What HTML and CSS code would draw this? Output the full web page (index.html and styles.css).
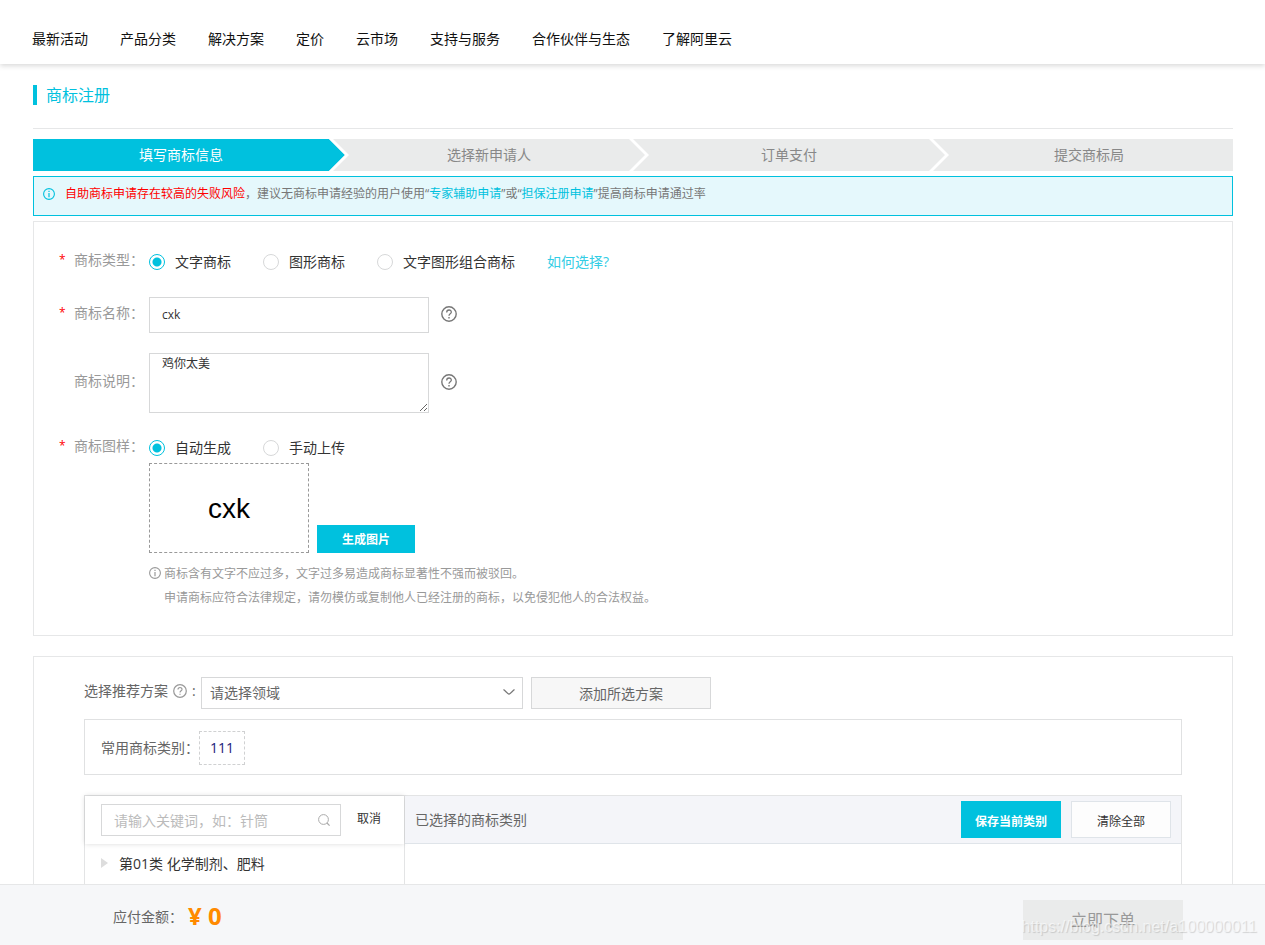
FILE: index.html
```html
<!DOCTYPE html>
<html lang="zh-CN">
<head>
<meta charset="utf-8">
<title>商标注册</title>
<meta name="viewport" content="width=device-width, initial-scale=1">
<link rel="stylesheet" href="styles.css">
</head>
<body>
<svg class="sprite" aria-hidden="true">
  <symbol id="help" viewBox="0 0 16 16"><circle cx="8" cy="8" r="7.2" fill="none" stroke="currentColor" stroke-width="1.4"/><path d="M5.7 6.4C5.7 3.2 10.4 3.3 10.3 6.2C10.2 7.8 8 7.7 8 9.7" fill="none" stroke="currentColor" stroke-width="1.3"/><path d="M7.3 11h1.4v1.4H7.3z" fill="currentColor"/></symbol>
  <symbol id="info" viewBox="0 0 12 12"><circle cx="6" cy="6" r="5.4" fill="none" stroke="currentColor" stroke-width="1.1"/><path d="M5.4 2.8h1.2v1.2H5.4zM5.4 5h1.2v4.2H5.4z" fill="currentColor"/></symbol>
</svg>

<header class="topbar">
  <nav class="nav">
    <a href="#">最新活动</a>
    <a href="#">产品分类</a>
    <a href="#">解决方案</a>
    <a href="#">定价</a>
    <a href="#">云市场</a>
    <a href="#">支持与服务</a>
    <a href="#">合作伙伴与生态</a>
    <a href="#">了解阿里云</a>
  </nav>
</header>

<main class="content">
  <div class="title-row"><h1 class="title">商标注册</h1></div>

  <ol class="steps">
    <li class="step step-active">填写商标信息<svg class="step-arrow" viewBox="0 0 20 32"><path d="M0 0H20V32H0z" fill="#eaebeb"/><path d="M0 0L16 16L0 32z" fill="#00c1de"/><path d="M0 0H4L20 16L4 32H0L16 16z" fill="#fff"/></svg></li>
    <li class="step">选择新申请人<svg class="step-arrow" viewBox="0 0 20 32"><path d="M0 0H4L20 16L4 32H0L16 16z" fill="#fff"/></svg></li>
    <li class="step">订单支付<svg class="step-arrow" viewBox="0 0 20 32"><path d="M0 0H4L20 16L4 32H0L16 16z" fill="#fff"/></svg></li>
    <li class="step">提交商标局</li>
  </ol>

  <div class="alert">
    <svg class="alert-icon"><use href="#info"/></svg>
    <p class="alert-text"><span class="danger">自助商标申请存在较高的失败风险</span>，建议无商标申请经验的用户使用“<a href="#">专家辅助申请</a>”或“<a href="#">担保注册申请</a>”提高商标申请通过率</p>
  </div>

  <form class="panel form">
    <div class="row row-radio" role="radiogroup" aria-labelledby="type-label">
      <span class="star">*</span><span class="label" id="type-label">商标类型：</span>
      <div class="options">
        <label class="option"><input class="radio" type="radio" name="type" checked>文字商标</label>
        <label class="option"><input class="radio" type="radio" name="type">图形商标</label>
        <label class="option"><input class="radio" type="radio" name="type">文字图形组合商标</label>
        <a class="how" href="#">如何选择?</a>
      </div>
    </div>
    <div class="row">
      <span class="star">*</span><label class="label" for="name">商标名称：</label>
      <input class="text-input" id="name" type="text" value="cxk">
      <svg class="help"><use href="#help"/></svg>
    </div>
    <div class="row">
      <span class="star"></span><label class="label" for="desc">商标说明：</label>
      <textarea class="text-area" id="desc">鸡你太美</textarea>
      <svg class="help"><use href="#help"/></svg>
    </div>
    <div class="row row-radio row-image" role="radiogroup" aria-labelledby="image-label">
      <span class="star">*</span><span class="label" id="image-label">商标图样：</span>
      <div class="options">
        <label class="option"><input class="radio" type="radio" name="image" checked>自动生成</label>
        <label class="option"><input class="radio" type="radio" name="image">手动上传</label>
      </div>
    </div>
    <div class="sample">
      <div class="sample-row">
        <div class="preview">cxk</div>
        <button class="btn-primary btn-generate" type="button">生成图片</button>
      </div>
      <div class="note">
        <svg class="note-icon"><use href="#info"/></svg>
        <p class="note-text">商标含有文字不应过多，文字过多易造成商标显著性不强而被驳回。<br>申请商标应符合法律规定，请勿模仿或复制他人已经注册的商标，以免侵犯他人的合法权益。</p>
      </div>
    </div>
  </form>

  <section class="panel category">
    <div class="plan">
      <label class="plan-label" for="plan">选择推荐方案 <svg class="plan-help"><use href="#help"/></svg> :</label>
      <div class="select-wrap">
        <select class="select" id="plan"><option>请选择领域</option></select>
        <svg class="chevron" viewBox="0 0 12 8"><path d="M.5 1.5C3 3.5 4.500 5.500 6 6.200C7.500 5.500 9 3.500 11.500 1.500" fill="none" stroke="#777" stroke-width="1.2"/></svg>
      </div>
      <button class="btn-add" type="button">添加所选方案</button>
    </div>
    <div class="common">
      <span>常用商标类别：</span><a class="tag" href="#">111</a>
    </div>
    <div class="picker">
      <div class="picker-left">
        <div class="search-bar">
          <div class="search">
            <input class="search-input" type="text" aria-label="关键词" placeholder="请输入关键词，如：针筒">
            <svg class="search-icon" viewBox="0 0 12 12"><circle cx="5.500" cy="5.500" r="4.900" fill="none" stroke="#aaa"/><path d="M9 9L11.600 11.600" stroke="#aaa" stroke-width="1.200"/></svg>
          </div>
          <button class="cancel" type="button">取消</button>
        </div>
        <div class="tree-item"><svg class="caret" viewBox="0 0 7 10"><path d="M0 0L7 5L0 10z" fill="#ddd"/></svg>第01类 化学制剂、肥料</div>
      </div>
      <div class="picker-right">
        <div class="selected-head">
          <span class="selected-title">已选择的商标类别</span>
          <button class="btn-primary btn-save" type="button">保存当前类别</button>
          <button class="btn-clear" type="button">清除全部</button>
        </div>
      </div>
    </div>
  </section>
</main>

<footer class="paybar">
  <span class="pay-label">应付金额：</span>
  <strong class="price">¥ 0</strong>
  <button class="btn-order" type="button">立即下单</button>
  <span class="watermark">https://blog.csdn.net/a100000011</span>
</footer>
</body>
</html>
```
FILE: styles.css
```css
* { box-sizing: border-box; }

body {
  margin: 0;
  height: 100vh;
  display: flex;
  flex-direction: column;
  overflow: hidden;
  background: #fff;
  color: #333;
  font-family: "Open Sans", "Noto Sans CJK SC", sans-serif;
  font-size: 14px;
  line-height: 20px;
}

button, input, select, textarea { font: inherit; color: inherit; border-radius: 0; outline: 0; }
button { padding: 0; border: 0; background: none; cursor: pointer; }
a { text-decoration: none; color: #00c1de; }
p, ol { margin: 0; padding: 0; }
svg { flex: none; }
.sprite { display: none; }

.topbar {
  flex: none;
  height: 64px;
  padding: 29px 32px 0;
  box-shadow: 0 2px 5px rgba(0, 0, 0, .15);
}
.nav { display: flex; gap: 32px; }
.nav a { color: #111; white-space: nowrap; }

.content {
  flex: 1;
  min-height: 0;
  overflow: hidden;
  margin-top: 6px;
  padding: 15px 32px 0 33px;
}

.title-row { padding-bottom: 23px; border-bottom: 1px solid #e6e7e8; }
.title {
  margin: 0;
  padding-left: 9px;
  border-left: 4px solid #00c1de;
  color: #00c1de;
  font-size: 16px;
  font-weight: 400;
  line-height: 20px;
}

.steps {
  display: grid;
  grid-template-columns: repeat(4, 1fr);
  margin: 10px 0 5px;
  list-style: none;
  background: #eaebeb;
}
.step {
  position: relative;
  padding-left: 12px;
  line-height: 32px;
  text-align: center;
  color: #888;
}
.step-active { padding: 0 4px 0 0; background: #00c1de; color: #fff; }
.step-arrow { position: absolute; z-index: 1; top: 0; right: -16px; width: 20px; height: 32px; }

.alert {
  display: flex;
  gap: 10px;
  height: 40px;
  padding: 7px 9px;
  border: 1px solid #00c1de;
  background: #e5f8fc;
  color: #777;
  font-size: 12px;
}
.alert-icon { width: 12px; height: 12px; margin-top: 4px; color: #00c1de; }
.danger { color: #f00; }

.panel { margin-top: 5px; border: 1px solid #e6e7e8; }
.form { padding: 30px 25px 25px; }
.row { display: flex; align-items: center; margin-bottom: 20px; }
.row-radio { margin-bottom: 25px; }
.star { width: 15px; padding-bottom: 4px; color: #f00; font-size: 12px; line-height: 16px; }
.label { width: 75px; padding-bottom: 4px; color: #999; line-height: 16px; white-space: nowrap; }
.options { display: flex; gap: 32px; }
.option { display: flex; align-items: center; gap: 10px; white-space: nowrap; }
.how { color: #33cde5; }
.radio {
  appearance: none;
  width: 16px;
  height: 16px;
  margin: 0;
  border: 1px solid #d7d8d9;
  border-radius: 50%;
}
.radio:checked { border-color: #00c1de; background: radial-gradient(circle, #00c1de 4px, #fff 5px); }
.text-input { width: 280px; height: 36px; padding: 0 12px 2px; border: 1px solid #d7d8d9; font-size: 12px; }
.text-area { width: 280px; height: 60px; padding: 0 12px; border: 1px solid #d7d8d9; font-size: 12px; resize: both; }
.help { width: 16px; height: 16px; margin: 0 0 2px 12px; color: #777; }

.row-image { margin: 25px 0 5px; }
.sample { padding-left: 90px; }
.sample-row { display: flex; align-items: flex-end; gap: 8px; }
.preview {
  width: 160px;
  height: 90px;
  border: 1px dashed #999;
  color: #000;
  font-family: "Liberation Sans", sans-serif;
  font-size: 28px;
  line-height: 90px;
  text-align: center;
}
.btn-primary { background: #00c1de; color: #fff; font-size: 12px; font-weight: 700; }
.btn-generate { width: 98px; height: 28px; padding-top: 2px; }
.note { display: flex; gap: 3px; margin-top: 9px; color: #999; font-size: 12px; }
.note-icon { width: 12px; height: 12px; margin-top: 5px; }
.note-text { line-height: 24px; }

.category { margin-top: 20px; padding: 20px 50px; }
.plan { display: flex; gap: 8px; color: #666; }
.plan-label { display: flex; align-items: center; gap: 5px; height: 28px; width: 109px; white-space: nowrap; }
.plan-help { width: 14px; height: 14px; color: #999; }
.select-wrap { position: relative; width: 322px; }
.select {
  appearance: none;
  width: 100%;
  height: 32px;
  padding: 0 8px;
  border: 1px solid #d7d8d9;
  background: #fff;
}
.chevron { position: absolute; top: 11px; right: 8px; width: 12px; height: 8px; pointer-events: none; }
.btn-add { width: 180px; height: 32px; padding-top: 2px; border: 1px solid #d7d8d9; background: #f7f7f7; }

.common {
  display: flex;
  align-items: center;
  margin-top: 10px;
  padding: 11px 16px 9px;
  border: 1px solid #e0e1e2;
  color: #666;
}
.tag { padding: 6px 10px; border: 1px dashed #d0d1d2; color: #1a1a7a; }

.picker { display: flex; height: 400px; margin-top: 20px; border: 1px solid #e3e4e5; }
.picker-left { width: 320px; border-right: 1px solid #e3e4e5; }
.search-bar {
  display: flex;
  gap: 16px;
  height: 48px;
  padding: 8px 16px;
  box-shadow: 0 0 5px rgba(0, 0, 0, .15);
}
.search { position: relative; width: 240px; }
.search-input { width: 100%; height: 32px; padding: 0 12px; border: 1px solid #d7d8d9; }
.search-input::placeholder { color: #bbb; }
.search-icon { position: absolute; top: 10px; right: 11px; width: 12px; height: 12px; }
.cancel { height: 30px; font-size: 12px; }
.tree-item { display: flex; align-items: center; gap: 11px; padding: 10px 16px; }
.caret { width: 7px; height: 10px; margin-bottom: 2px; }
.picker-right { flex: 1; }
.selected-head {
  display: flex;
  align-items: center;
  gap: 10px;
  height: 48px;
  padding: 0 10px;
  border-bottom: 1px solid #dfe4e9;
  background: #f4f5f9;
  color: #666;
}
.selected-title { flex: 1; }
.btn-save { width: 100px; height: 37px; padding-top: 4px; }
.btn-clear { width: 100px; height: 37px; padding-top: 4px; border: 1px solid #dfe4e9; background: #fdfdfd; color: #333; font-size: 12px; }

.paybar {
  position: relative;
  z-index: 2;
  flex: none;
  display: flex;
  align-items: center;
  height: 61px;
  padding: 4px 82px 0 113px;
  border-top: 1px solid #e6e7e8;
  background: #f6f7f9;
}
.pay-label { width: 75px; color: #666; }
.price { flex: 1; padding-bottom: 2px; color: #ff8a00; font-size: 24px; font-weight: 700; }
.btn-order { width: 160px; height: 40px; margin-top: 6px; background: #eaebeb; color: #999; font-size: 16px; }
.watermark {
  position: absolute;
  right: 8px;
  bottom: 8px;
  color: rgba(255, 255, 255, .6);
  font-family: "Liberation Sans", sans-serif;
  font-size: 16px;
  text-shadow: 1px 1px 1px rgba(0, 0, 0, .15);
  pointer-events: none;
}
```
